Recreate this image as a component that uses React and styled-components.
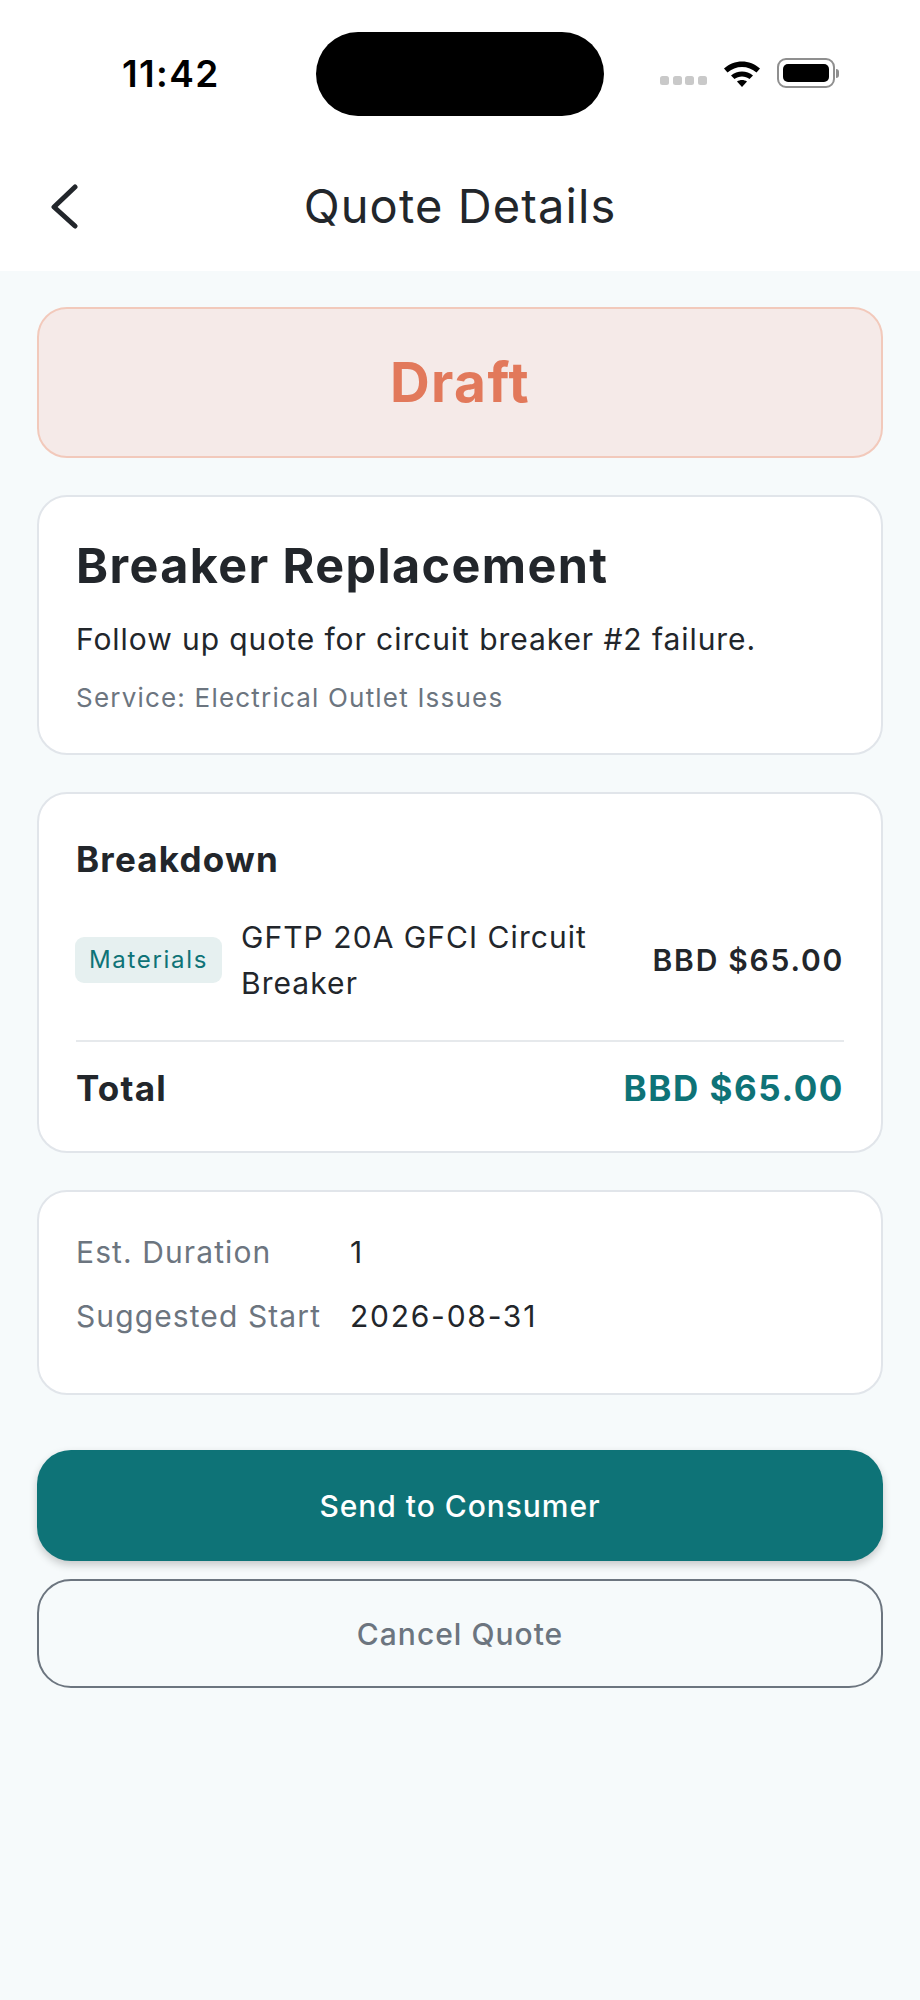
import styled, { createGlobalStyle } from "styled-components";

const GlobalStyle = createGlobalStyle`
  html, body {
    margin: 0;
    padding: 0;
    background: #f6fafb;
  }
  * {
    box-sizing: border-box;
  }
`;

export default function App() {
  return (
    <>
      <GlobalStyle />
      <Page>
        <Header>
          <StatusBar>
            <Time>11:42</Time>
            <Island />
            <StatusIcons>
              <Dots>
                <Dot />
                <Dot />
                <Dot />
                <Dot />
              </Dots>
              <svg width="40" height="28" viewBox="0 0 38 28">
                <path d="M1 9.5C11 0 27 0 37 9.5L33.5 13.5C25.5 6 12.5 6 4.5 13.5Z" fill="#000" />
                <path d="M8 16.5C14 11 24 11 30 16.5L26.5 20C22.5 16.5 15.5 16.5 11.5 20Z" fill="#000" />
                <path d="M14 22.5C17 20.5 21 20.5 24 22.5L19 28Z" fill="#000" />
              </svg>
              <Battery>
                <BatteryFill />
              </Battery>
              <BatteryCap />
            </StatusIcons>
          </StatusBar>
          <NavBar>
            <BackIcon width="28" height="46" viewBox="0 0 28 46">
              <path d="M25 3L4 23L25 42" fill="none" stroke="#22262b" strokeWidth="5" strokeLinecap="round" strokeLinejoin="round" />
            </BackIcon>
            <Title>Quote Details</Title>
          </NavBar>
        </Header>
        <Content>
          <StatusBanner>Draft</StatusBanner>
          <SummaryCard>
            <QuoteName>Breaker Replacement</QuoteName>
            <Description>Follow up quote for circuit breaker #2 failure.</Description>
            <ServiceLine>Service: Electrical Outlet Issues</ServiceLine>
          </SummaryCard>
          <BreakdownCard>
            <SectionTitle>Breakdown</SectionTitle>
            <ItemRow>
              <Chip>Materials</Chip>
              <ItemName>GFTP 20A GFCI Circuit Breaker</ItemName>
              <ItemPrice>BBD $65.00</ItemPrice>
            </ItemRow>
            <TotalRow>
              <TotalLabel>Total</TotalLabel>
              <TotalValue>BBD $65.00</TotalValue>
            </TotalRow>
          </BreakdownCard>
          <InfoCard>
            <InfoRow>
              <InfoLabel>Est. Duration</InfoLabel>
              <InfoValue>1</InfoValue>
            </InfoRow>
            <InfoRow>
              <InfoLabel>Suggested Start</InfoLabel>
              <InfoValue>2026-08-31</InfoValue>
            </InfoRow>
          </InfoCard>
          <Actions>
            <PrimaryButton>Send to Consumer</PrimaryButton>
            <OutlineButton>Cancel Quote</OutlineButton>
          </Actions>
        </Content>
      </Page>
    </>
  );
}

const Page = styled.div`
  width: 920px;
  min-height: 2000px;
  background: #f6fafb;
  color: #22262b;
  font-family: Inter, "Liberation Sans", sans-serif;
`;

const Header = styled.header`
  background: #ffffff;
  height: 271px;
`;

const StatusBar = styled.div`
  height: 148px;
  padding: 32px 62px 0 122px;
  display: flex;
  align-items: flex-start;
`;

const Time = styled.div`
  width: 194px;
  margin-top: 20px;
  font-size: 37px;
  line-height: 44px;
  font-weight: 600;
  letter-spacing: 1.4px;
  color: #000000;
`;

const Island = styled.div`
  width: 288px;
  height: 84px;
  border-radius: 42px;
  background: #000000;
`;

const StatusIcons = styled.div`
  margin: 26px 0 0 56px;
  display: flex;
  align-items: center;
`;

const Dots = styled.div`
  display: flex;
  gap: 3.5px;
  margin: 14px 15px 0 0;
`;

const Dot = styled.span`
  width: 9px;
  height: 9px;
  border-radius: 2.5px;
  background: #c9c9c9;
`;

const Battery = styled.div`
  width: 58px;
  height: 30px;
  margin-left: 15px;
  padding: 4px;
  border: 2px solid #8f8f8f;
  border-radius: 9px;
`;

const BatteryFill = styled.div`
  height: 100%;
  border-radius: 5px;
  background: #000000;
`;

const BatteryCap = styled.span`
  width: 3px;
  height: 9px;
  margin-left: 1px;
  border-radius: 0 3px 3px 0;
  background: #8f8f8f;
`;

const NavBar = styled.nav`
  position: relative;
  height: 123px;
  display: flex;
  align-items: flex-start;
  justify-content: center;
`;

const BackIcon = styled.svg`
  position: absolute;
  left: 50px;
  top: 36px;
`;

const Title = styled.h1`
  margin: 30px 0 0;
  font-size: 47px;
  line-height: 56px;
  font-weight: 400;
  letter-spacing: 1.1px;
  color: #22262b;
`;

const Content = styled.main`
  padding: 36px 37px 0;
  display: flex;
  flex-direction: column;
  gap: 37px;
`;

const StatusBanner = styled.div`
  height: 151px;
  padding-bottom: 2px;
  display: flex;
  align-items: center;
  justify-content: center;
  border: 2px solid #f2c9bb;
  border-radius: 30px;
  background: #f5eae8;
  color: #e2795b;
  font-size: 55px;
  font-weight: 700;
  letter-spacing: 1.4px;
`;

const Card = styled.section`
  border: 2px solid #e1e5ea;
  border-radius: 30px;
  background: #ffffff;
`;

const SummaryCard = styled(Card)`
  padding: 41px 37px 39px;
`;

const QuoteName = styled.h2`
  margin: 0;
  font-size: 48.5px;
  line-height: 56px;
  font-weight: 700;
  letter-spacing: 1.4px;
`;

const Description = styled.p`
  margin: 24px 0 0;
  font-size: 30px;
  line-height: 42px;
  font-weight: 400;
  letter-spacing: 0.93px;
`;

const ServiceLine = styled.p`
  margin: 22px 0 0;
  font-size: 26px;
  line-height: 32px;
  letter-spacing: 1.2px;
  color: #6c757f;
`;

const BreakdownCard = styled(Card)`
  padding: 43px 37px 41px;
`;

const SectionTitle = styled.h3`
  margin: 0;
  font-size: 35px;
  line-height: 44px;
  font-weight: 700;
  letter-spacing: 1.2px;
`;

const ItemRow = styled.div`
  margin-top: 33px;
  padding-bottom: 34px;
  display: flex;
  align-items: center;
  border-bottom: 2px solid #e6e9ec;
`;

const Chip = styled.span`
  flex: none;
  width: 147px;
  height: 46px;
  margin: -1px 0 0 -1px;
  display: flex;
  align-items: center;
  justify-content: center;
  border-radius: 9px;
  background: #e6f0f0;
  color: #0e7377;
  font-size: 24px;
  letter-spacing: 1.7px;
`;

const ItemName = styled.div`
  flex: 1;
  margin: 0 40px 0 19px;
  font-size: 30px;
  line-height: 46px;
  letter-spacing: 1.05px;
`;

const ItemPrice = styled.div`
  flex: none;
  font-size: 30px;
  font-weight: 600;
  letter-spacing: 1.75px;
`;

const TotalRow = styled.div`
  margin-top: 24px;
  display: flex;
  align-items: center;
  justify-content: space-between;
`;

const TotalLabel = styled.div`
  font-size: 35px;
  line-height: 44px;
  font-weight: 700;
  letter-spacing: 1.2px;
`;

const TotalValue = styled(TotalLabel)`
  letter-spacing: 1.55px;
  color: #0e7377;
`;

const InfoCard = styled(Card)`
  height: 205px;
  padding: 40px 37px;
  display: flex;
  flex-direction: column;
  gap: 24px;
`;

const InfoRow = styled.div`
  display: flex;
  font-size: 30px;
  line-height: 40px;
`;

const InfoLabel = styled.div`
  width: 274px;
  letter-spacing: 1.1px;
  color: #6c757f;
`;

const InfoValue = styled.div`
  letter-spacing: 1.75px;
  color: #22262b;
`;

const Actions = styled.div`
  margin-top: 18px;
  display: flex;
  flex-direction: column;
  gap: 18px;
`;

const PrimaryButton = styled.button`
  height: 111px;
  border: 0;
  border-radius: 34px;
  background: #0e7377;
  box-shadow: 0 4px 9px rgba(0, 0, 0, 0.2);
  color: #ffffff;
  font-family: inherit;
  font-size: 30px;
  font-weight: 500;
  letter-spacing: 0.95px;
`;

const OutlineButton = styled.button`
  height: 109px;
  border: 2px solid #6c757f;
  border-radius: 34px;
  background: transparent;
  color: #6c757f;
  font-family: inherit;
  font-size: 30px;
  font-weight: 500;
  letter-spacing: 1px;
`;
